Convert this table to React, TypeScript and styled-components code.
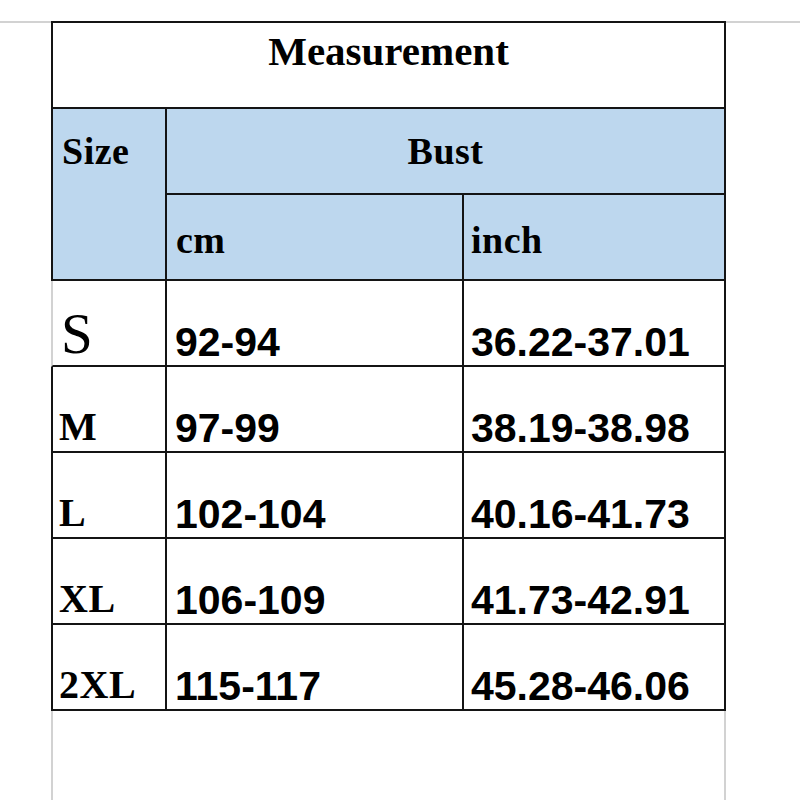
import React from "react";
import styled, { createGlobalStyle } from "styled-components";

const GlobalStyle = createGlobalStyle`
  html, body {
    margin: 0;
    padding: 0;
    background: #ffffff;
  }
  * {
    box-sizing: border-box;
  }
`;

const INK = "#141414";
const GRID = "#d2d2d2";
const HEAD_BG = "#bdd7ee";

const Page = styled.div`
  display: flex;
  align-items: stretch;
  height: 800px;
  padding-top: 21px;
  overflow: hidden;
`;

const Gutter = styled.div<{ $grow?: boolean }>`
  width: ${(p) => (p.$grow ? "auto" : "51px")};
  flex: ${(p) => (p.$grow ? "1" : "none")};
  border-top: 2px solid ${GRID};
`;

const Sheet = styled.div`
  width: 675px;
  display: flex;
  flex-direction: column;
`;

const Tail = styled.div`
  flex: 1;
  border-left: 2px solid ${GRID};
  border-right: 2px solid ${GRID};
`;

const Grid = styled.div`
  display: grid;
  grid-template-columns: 116px 297px 262px;
  grid-template-rows: 88px repeat(7, 86px);
  color: #000;
`;

const Cell = styled.div<{
  $first?: boolean;
  $head?: boolean;
  $softLeft?: boolean;
}>`
  display: flex;
  border-right: 2px solid ${INK};
  border-bottom: 2px solid ${INK};
  border-left: ${(p) =>
    p.$first ? `2px solid ${p.$softLeft ? GRID : INK}` : "none"};
  background: ${(p) => (p.$head ? HEAD_BG : "#ffffff")};
  white-space: nowrap;
`;

const TitleCell = styled(Cell)`
  grid-column: 1 / 4;
  border-top: 2px solid ${INK};
  justify-content: center;
  align-items: flex-start;
  padding-top: 8px;
  font: bold 41px/41px "Liberation Serif", "Times New Roman", serif;
`;

const SizeCell = styled(Cell)`
  grid-row: 2 / 4;
  align-items: flex-start;
  padding: 23px 0 0 9px;
  font: bold 38px/38px "Liberation Serif", "Times New Roman", serif;
  letter-spacing: 0.5px;
`;

const BustCell = styled(Cell)`
  grid-column: 2 / 4;
  justify-content: center;
  align-items: flex-start;
  padding-top: 23px;
  font: bold 38px/38px "Liberation Serif", "Times New Roman", serif;
  letter-spacing: 0.5px;
`;

const UnitCell = styled(Cell)<{ $pad: number }>`
  align-items: flex-start;
  padding: 26px 0 0 ${(p) => p.$pad}px;
  font: bold 38px/38px "Liberation Serif", "Times New Roman", serif;
  letter-spacing: 0.5px;
`;

const LabelCell = styled(Cell)<{ $plain?: boolean }>`
  align-items: flex-end;
  padding: 0 0 ${(p) => (p.$plain ? 3 : 4)}px ${(p) => (p.$plain ? 8 : 6)}px;
  font: ${(p) => (p.$plain ? "normal 57px/57px" : "bold 40px/40px")}
    "Liberation Serif", "Times New Roman", serif;
  letter-spacing: ${(p) => (p.$plain ? "0" : "0.5px")};
`;

const ValueCell = styled(Cell)<{ $pad: number }>`
  align-items: flex-end;
  padding: 0 0 2px ${(p) => p.$pad}px;
  font: bold 41px/41px "Liberation Sans", Arial, sans-serif;
`;

const rows = [
  { size: "S", cm: "92-94", inch: "36.22-37.01" },
  { size: "M", cm: "97-99", inch: "38.19-38.98" },
  { size: "L", cm: "102-104", inch: "40.16-41.73" },
  { size: "XL", cm: "106-109", inch: "41.73-42.91" },
  { size: "2XL", cm: "115-117", inch: "45.28-46.06" },
];

export default function App() {
  return (
    <>
      <GlobalStyle />
      <Page>
        <Gutter />
        <Sheet>
          <Grid>
            <TitleCell $first>Measurement</TitleCell>
            <SizeCell $first $head>
              Size
            </SizeCell>
            <BustCell $head>Bust</BustCell>
            <UnitCell $head $pad={9}>
              cm
            </UnitCell>
            <UnitCell $head $pad={7}>
              inch
            </UnitCell>
            {rows.map((r) => (
              <React.Fragment key={r.size}>
                <LabelCell
                  $first
                  $plain={r.size === "S"}
                  $softLeft={r.size === "S"}
                >
                  {r.size}
                </LabelCell>
                <ValueCell $pad={8}>{r.cm}</ValueCell>
                <ValueCell $pad={7}>{r.inch}</ValueCell>
              </React.Fragment>
            ))}
          </Grid>
          <Tail />
        </Sheet>
        <Gutter $grow />
      </Page>
    </>
  );
}
